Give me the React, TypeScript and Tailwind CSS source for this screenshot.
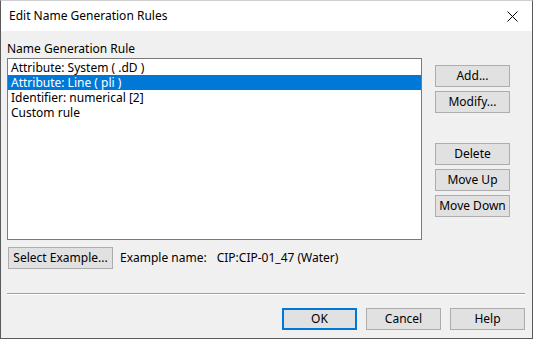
import React from 'react';

const rules = ['Attribute: System ( .dD )', 'Attribute: Line ( pli )', 'Identifier: numerical [2]', 'Custom rule'];

const Btn: React.FC<{ label: string; className?: string; def?: boolean }> = ({ label, className = '', def }) => (
  <button
    className={`h-[22px] w-[75px] bg-[#e1e1e1] text-[12px] leading-none text-black flex items-center justify-center ${def ? 'border-2 border-[#0078d7]' : 'border border-[#adadad]'} ${className}`}
  >
    {label}
  </button>
);

export default function App() {
  return (
    <div
      className="w-[533px] h-[339px] bg-[#f0f0f0] border border-[#5a5a5a] border-t-[#d0d0d0] flex flex-col overflow-hidden"
      style={{ fontFamily: '"Noto Sans", "Liberation Sans", sans-serif' }}
    >
      {/* Title bar */}
      <div className="h-[30px] bg-white flex items-center justify-between pl-[8px] pr-[10px] shrink-0">
        <span className="text-[12px] text-black">Edit Name Generation Rules</span>
        <svg width="11" height="11" viewBox="0 0 11 11" className="mr-[4px]">
          <path d="M0.5 0.5 L10.5 10.5 M10.5 0.5 L0.5 10.5" stroke="#000" strokeWidth="1" />
        </svg>
      </div>

      {/* Body */}
      <div className="flex-1 flex flex-col pl-[6px] pr-[6px]">
        <div className="flex">
          <div className="w-[415px]">
            <div className="mt-[10px] h-[16px] text-[12px] leading-[16px] text-black">Name Generation Rule</div>
            <div className="mt-[1px] h-[182px] bg-white border border-[#7a7a7a] pt-[1px]">
              {rules.map((r, i) => (
                <div
                  key={r}
                  className={`h-[15px] pl-[3px] text-[12px] leading-[15px] ${i === 1 ? 'bg-[#0078d7] text-white' : 'text-black'}`}
                >
                  {r}
                </div>
              ))}
            </div>
          </div>
          <div className="ml-[13px] mt-[34px] flex flex-col">
            <Btn label="Add..." />
            <Btn label="Modify..." className="mt-[4px]" />
            <Btn label="Delete" className="mt-[30px]" />
            <Btn label="Move Up" className="mt-[4px]" />
            <Btn label="Move Down" className="mt-[4px]" />
          </div>
        </div>

        <div className="mt-[7px] flex items-center">
          <button className="h-[22px] w-[105px] bg-[#e1e1e1] border border-[#adadad] text-[12px] leading-none text-black ml-[1px]">
            Select Example...
          </button>
          <span className="ml-[7px] text-[12px] text-black">Example name:</span>
          <span className="ml-[10px] text-[12px] text-black">CIP:CIP-01_47 (Water)</span>
        </div>

        <div className="mt-[24px] border-t border-[#a0a0a0] border-b border-b-white mr-[1px]" />

        <div className="mt-[13px] flex justify-end gap-[9px] mr-[1px]">
          <Btn label="OK" def />
          <Btn label="Cancel" />
          <Btn label="Help" />
        </div>
      </div>
    </div>
  );
}
